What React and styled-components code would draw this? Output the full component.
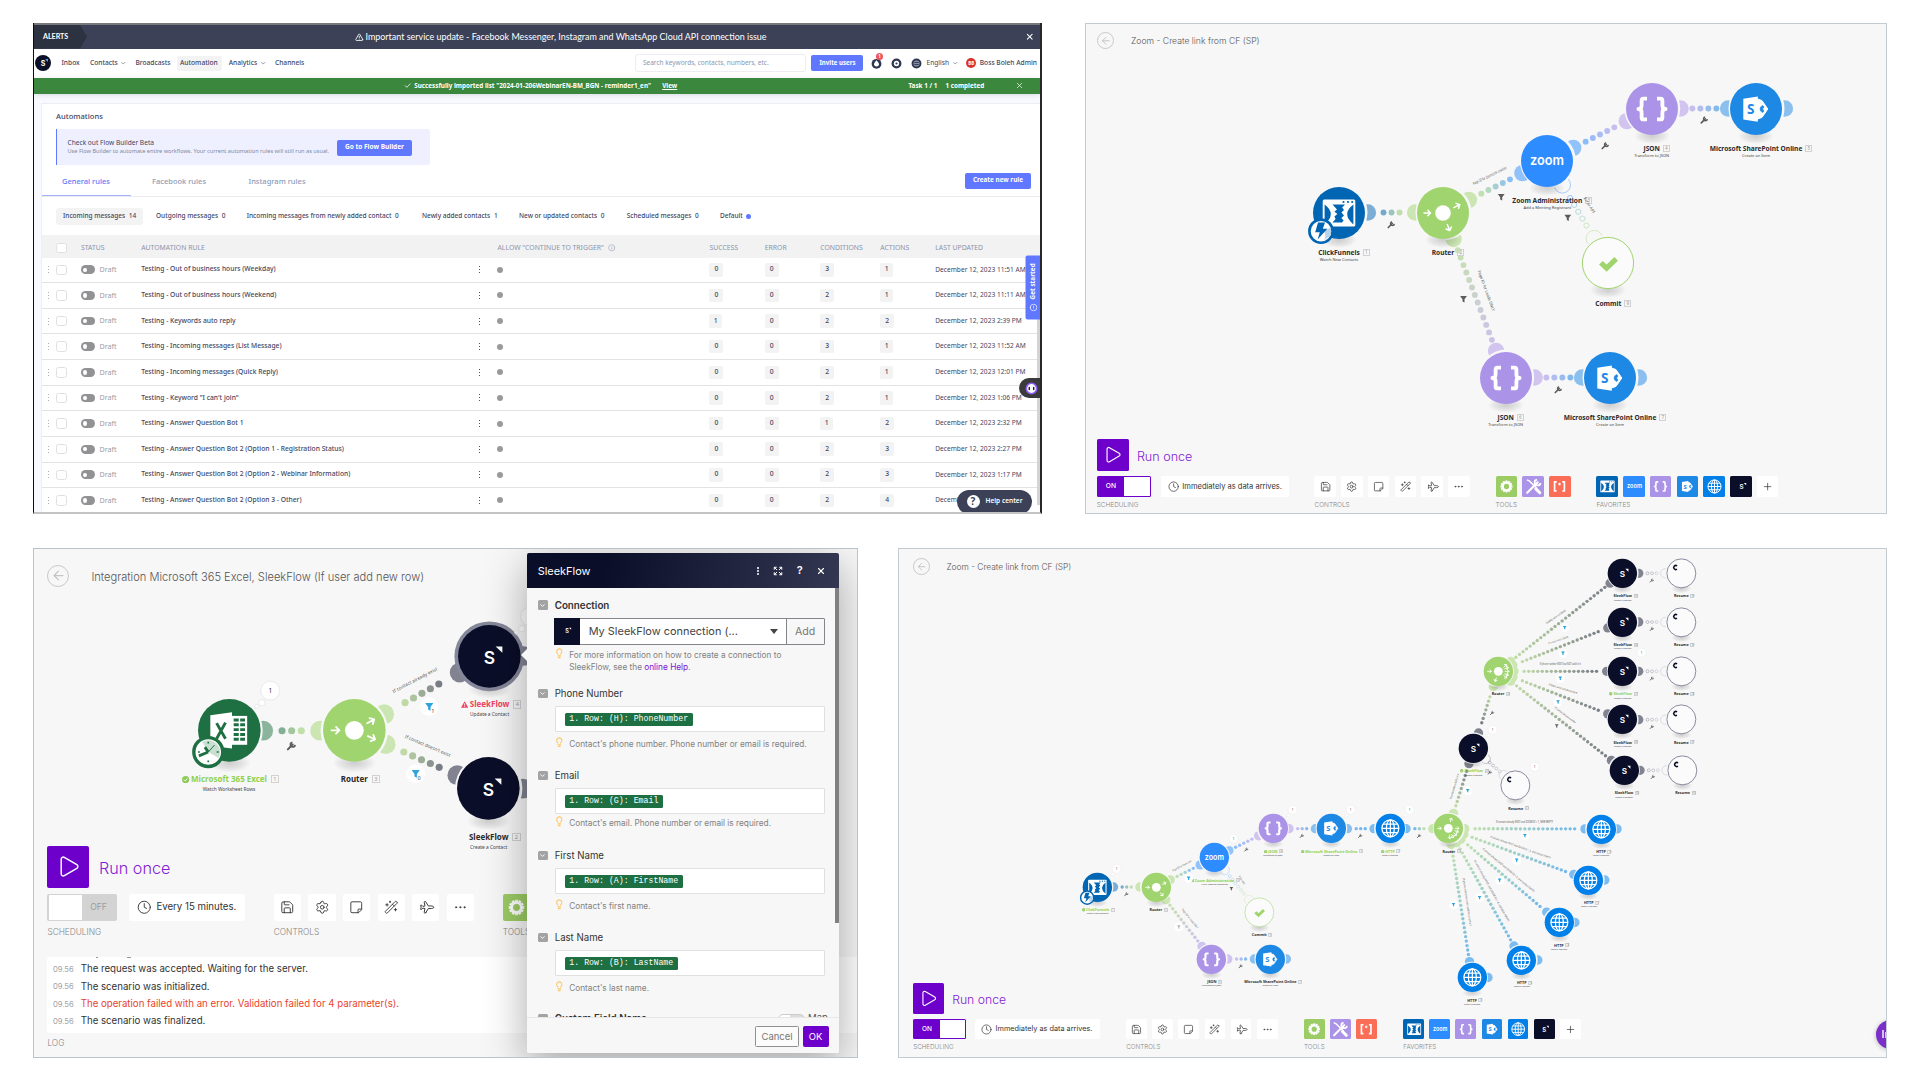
import React from "react";
import styled, { createGlobalStyle, css } from "styled-components";
import {
  ArrowLeft, Check, ChevronDown, Clock, Ellipsis, EllipsisVertical, Info, Lightbulb,
  Plane, Play, Plus, Save, Settings, StickyNote, TriangleAlert, WandSparkles, X, Expand,
} from "lucide-react";

const GlobalStyle = createGlobalStyle`
  *, *::before, *::after { box-sizing: border-box; }
  body { margin: 0; background: #fff; overflow: hidden; }
  svg { display: block; flex: none; }
`;

const NOTO = `"Noto Sans", "Open Sans", sans-serif`;
const INTER = `Inter, "Liberation Sans", sans-serif`;

/* ---------- page ---------- */
const Page = styled.main`
  width: 1920px; height: 1080px; padding: 23px 33px 0;
  display: flex; flex-direction: column; gap: 34px; background: #fff;
`;
const Shelf = styled.div`display: flex; justify-content: space-between; align-items: flex-start;`;

/* ---------- automation list ---------- */
const Inbox = styled.section`
  width: 1009px; height: 491px; overflow: hidden; position: relative;
  border-left: 1px solid #0c0c0c; border-right: 2px solid #26272b; border-bottom: 2px solid #c4c4c4;
  background: #f8f9fe; font: 500 6.65px/1.3 ${NOTO}; color: #3f4663; white-space: nowrap;
  display: flex; flex-direction: column;
`;
const AlertBar = styled.div`
  height: 25.5px; border-top: 2px solid #77787b; background: #3c4158; color: #fff;
  display: flex; align-items: center; font-family: Lato, sans-serif; flex: none;
`;
const AlertTag = styled.div`
  align-self: stretch; width: 53px; padding-left: 9px; background: #2d3240;
  display: flex; align-items: center; font-weight: 700; font-size: 7.1px;
  clip-path: polygon(0 0, 46px 0, 53px 50%, 46px 100%, 0 100%);
`;
const AlertText = styled.div`
  margin-left: 268px; width: 670px; display: flex; align-items: center; gap: 2px; font-size: 8.95px; font-weight: 400;
`;
const Nav = styled.nav`height: 29.5px; background: #fff; display: flex; align-items: center; padding-left: 1px; flex: none;`;
const Logo = styled.div`
  width: 16px; height: 16px; border-radius: 50%; background: #0b1029; color: #fff; flex: none; position: relative;
  display: grid; place-items: center; margin: 0 10.5px 0 0; font: 700 7px/1 ${INTER};
  &::after { content: ""; position: absolute; left: 10px; top: 3.5px; border-top: 3px solid #4ea2ff; border-left: 3px solid transparent; }
`;
const NavItem = styled.div`
  width: ${(p) => p.$w}px; height: 15px; display: flex; align-items: center; gap: 2.5px; flex: none;
  margin-right: ${(p) => p.$mr || 0}px; padding-left: ${(p) => p.$pl || 0}px; border-radius: 2px;
  background: ${(p) => (p.$active ? "#f3f3f4" : "transparent")}; font-weight: ${(p) => p.$fw || "inherit"};
`;
const Search = styled.div`
  width: 170.5px; height: 18px; border: 1px solid #ececf1; border-radius: 3px; padding-left: 6.5px;
  display: flex; align-items: center; font-size: 6.5px; font-weight: 400; color: #8b97b3; margin: 0 5.5px 0 330.5px;
`;
const Btn = styled.div`
  width: ${(p) => p.$w}px; height: 16px; border-radius: 2px; background: #5f78ff; color: #fff; flex: none;
  display: grid; place-items: center; font-weight: 700; font-size: ${(p) => p.$fs || 6.4}px;
`;
const IconBar = styled.div`display: flex; margin-left: 3px;`;
const IconSpot = styled.div`width: 20px; display: flex; justify-content: center; position: relative; flex: none;`;
const Dot = styled.i`
  position: absolute; left: 9.5px; top: -4.5px; width: 7px; height: 7px; border-radius: 50%;
  background: #f4515c; color: #fff; font: 700 4.5px/7px ${NOTO}; text-align: center;
`;
const Avatar = styled.div`
  width: 10px; height: 10px; border-radius: 50%; background: #d9342b; color: #fff;
  font: 700 4.5px/10px ${NOTO}; text-align: center; margin-right: 3.5px;
`;
const Success = styled.div`
  height: 15.5px; background: #3b873e; color: #fff; display: flex; align-items: center; flex: none; gap: 0;
  font-weight: 700; font-size: 6.32px; box-shadow: 0 1px 5px rgba(60, 66, 88, .16); padding-left: 369.5px;
`;
const SuccessCheck = styled(Check)`margin-right: 3.2px;`;
const Card = styled.div`
  margin: 9.5px 0 0 7px; border-top: 1px solid #ececf3; border-left: 1px solid #eeeef4; background: #fff; flex: 1;
`;
const CardTitle = styled.h1`margin: 0; height: 25px; padding-left: 14px; font-size: 7.6px; font-weight: 500; line-height: 25.5px;`;
const Banner = styled.div`
  width: 374px; height: 36px; margin-left: 14px; border-left: 1.5px solid #6079ff; background: #eef0ff;
  border-radius: 0 2px 2px 0; padding: 1px 0 0 10.5px; display: flex; align-items: center; font-weight: 400; font-size: 6.6px;
`;
const BannerText = styled.div`
  width: 269.5px; line-height: 9px;
  small { display: block; font-size: 5.61px; color: #7f879e; line-height: 9.5px; }
`;
const Tabs = styled.div`
  height: 32px; border-bottom: 1px solid #ebebed; display: flex; align-items: center; font-size: 7.5px;
`;
const Tab = styled.div`
  align-self: stretch; width: ${(p) => p.$w}px; padding: 0 0 0 ${(p) => p.$pl}px; line-height: 32px;
  color: ${(p) => (p.$on ? "#6179f8" : "#8d9cb8")};
  border-bottom: ${(p) => (p.$on ? "1.5px solid #a5b2fb" : "0")};
`;
const Filters = styled.div`height: 38px; display: flex; align-items: center; padding: .5px 0 0 14px; font-size: 6.51px;`;
const FilterItem = styled.div`
  height: 17.5px; border-radius: 3px; padding-left: 7px; width: ${(p) => p.$w}px; margin-right: ${(p) => p.$mr || 0}px;
  background: ${(p) => (p.$on ? "#f3f3f4" : "transparent")}; display: flex; align-items: center; gap: 3.6px;
`;
const BlueDot = styled.i`width: 5px; height: 5px; border-radius: 50%; background: #5f78ff;`;
const rowGrid = css`
  display: grid; align-items: center;
  grid-template-columns: 14px 25px 60.2px 334.8px 21.5px 212px 55.3px 55.5px 60px 55px 1fr;
`;
const HeadRow = styled.div`
  ${rowGrid} height: 22.5px; background: #f2f2f3; color: #8a94ab; font-size: 6.85px; font-weight: 400; padding-top: 3.5px;
`;
const Row = styled.div`${rowGrid} height: 25.64px; border-bottom: 1px solid #e3e3e5; background: #fff; font-size: 6.72px;`;
const Box = styled.i`width: 10.5px; height: 10.5px; border: 1px solid #e0e0e3; border-radius: 2.5px; background: #fff;`;
const Dots = styled.i`
  width: 1.4px; height: 7px; margin-left: ${(p) => (p.$c ? 3 : 5.8)}px;
  background: repeating-linear-gradient(${(p) => p.$c || "#b0b0b4"} 0 1.4px, transparent 1.4px 2.8px);
`;
const Status = styled.div`display: flex; align-items: center; gap: 4.5px; color: #9d9da1; font-weight: 400; font-size: 7.1px;`;
const Toggle = styled.i`
  width: 14px; height: 8.8px; border-radius: 5px; background: #929294; display: flex; align-items: center; padding-left: 2.4px;
  &::after { content: ""; width: 4px; height: 4.6px; border-radius: 50%; background: #fff; }
`;
const GreyDot = styled.i`width: 6px; height: 6px; border-radius: 50%; background: #9a9a9c;`;
const Chip = styled.span`
  width: ${(p) => (p.$n === 1 ? 12.6 : 14)}px; height: 13.6px; border-radius: 2px; background: #f3f3f4; display: grid; place-items: center;
`;
const DateText = styled.span`font-weight: 400; font-size: 6.6px;`;
const HeadLabel = styled.span`display: flex; align-items: center; gap: 4px; grid-column: ${(p) => p.$col};`;
const ScrollRail = styled.i`position: absolute; right: 0; top: 234px; width: 3px; height: 248px; background: #d4d4d6;`;
const SideTab = styled.div`
  position: absolute; right: 0; top: 233px; width: 14.5px; height: 63.5px; background: #5f78ff; color: #fff; border-radius: 0 2px 2px 0;
  writing-mode: vertical-rl; transform: rotate(180deg); display: flex; align-items: center; gap: 4px; padding-top: 8px;
  font-weight: 700; font-size: 6.4px;
`;
const Bot = styled.div`
  position: absolute; right: 0; top: 355px; width: 21px; height: 20px; border-radius: 10px 0 0 10px; background: #3a3a3d;
  display: grid; place-items: center; padding-left: 3px;
`;
const Help = styled.div`
  position: absolute; right: 8.5px; top: 466.5px; width: 74.5px; height: 24px; border-radius: 12px; background: #3c4158; color: #fff;
  display: flex; align-items: center; gap: 6px; padding-left: 9.5px; font-weight: 600; font-size: 6.54px;
  b { width: 13px; height: 13px; border-radius: 50%; background: #fff; color: #3c4158; font: 700 10px/13px ${NOTO}; text-align: center; }
`;

const RULES = [
  ["Testing - Out of business hours (Weekday)", [0, 0, 3, 1], "11:51 AM"],
  ["Testing - Out of business hours (Weekend)", [0, 0, 2, 1], "11:11 AM"],
  ["Testing - Keywords auto reply", [1, 0, 2, 2], "2:39 PM"],
  ["Testing - Incoming messages (List Message)", [0, 0, 3, 1], "11:52 AM"],
  ["Testing - Incoming messages (Quick Reply)", [0, 0, 2, 1], "12:01 PM"],
  ['Testing - Keyword "I can\'t join"', [0, 0, 2, 1], "1:06 PM"],
  ["Testing - Answer Question Bot 1", [0, 0, 1, 2], "2:32 PM"],
  ["Testing - Answer Question Bot 2 (Option 1 - Registration Status)", [0, 0, 2, 3], "2:27 PM"],
  ["Testing - Answer Question Bot 2 (Option 2 - Webinar Information)", [0, 0, 2, 3], "1:17 PM"],
  ["Testing - Answer Question Bot 2 (Option 3 - Other)", [0, 0, 2, 4], "1:12 PM"],
];

function AutomationList() {
  return (
    <Inbox>
      <AlertBar>
        <AlertTag>ALERTS</AlertTag>
        <AlertText><TriangleAlert size={8.5} strokeWidth={2.4} />Important service update - Facebook Messenger, Instagram and WhatsApp Cloud API connection issue</AlertText>
        <X size={9.5} strokeWidth={2.6} />
      </AlertBar>
      <Nav>
        <Logo>S</Logo>
        <NavItem $w={28.5}>Inbox</NavItem>
        <NavItem $w={45.5}>Contacts<ChevronDown size={6.5} /></NavItem>
        <NavItem $w={36} $mr={5}>Broadcasts</NavItem>
        <NavItem $w={45.5} $active $pl={3.5} $mr={6.7}>Automation</NavItem>
        <NavItem $w={46.3}>Analytics<ChevronDown size={6.5} /></NavItem>
        <NavItem $w={30}>Channels</NavItem>
        <Search>Search keywords, contacts, numbers, etc.</Search>
        <Btn $w={52} $fs={6.1}>Invite users</Btn>
        <IconBar>
          <IconSpot>
            <svg width="11" height="11" viewBox="-5.5 -5.5 11 11">
              <circle r="4.9" cy=".3" fill="#2f3650" /><path d="M0-3.2C1.6-1.4 2.4-.4 2.4.8A2.4 2.2 0 0 1-2.4.8C-2.4-.4-1.6-1.4 0-3.2Z" fill="#fff" />
            </svg>
            <Dot>1</Dot>
          </IconSpot>
          <IconSpot><svg width="11" height="11" viewBox="-5.5 -5.5 11 11"><circle r="3.8" fill="none" stroke="#2f3650" strokeWidth="2.3" /><circle r="1.1" fill="#2f3650" /></svg></IconSpot>
          <IconSpot><svg width="11" height="11" viewBox="-5.5 -5.5 11 11"><circle r="4" fill="#8b90a5" stroke="#2f3650" strokeWidth="1.9" /><path d="M-2.2-1H2.2M-2.2 1H2.2" stroke="#2f3650" strokeWidth=".9" /></svg></IconSpot>
        </IconBar>
        <NavItem $w={39.8} $fw={400}>English<ChevronDown size={6.5} /></NavItem>
        <Avatar>BB</Avatar>Boss Boleh Admin
      </Nav>
      <Success>
        <SuccessCheck size={7.5} strokeWidth={2.5} />
        <NavItem $w={248}>Successfully imported list "2024-01-206WebinarEN-BM_BGN - reminder1_en"</NavItem>
        <NavItem $w={246.3}><u>View</u></NavItem>
        <NavItem $w={37}>Task 1 / 1</NavItem>
        <NavItem $w={70}>1 completed</NavItem>
        <X size={9} strokeWidth={1.8} />
      </Success>
      <Card>
        <CardTitle>Automations</CardTitle>
        <Banner>
          <BannerText>Check out Flow Builder Beta<small>Use Flow Builder to automate entire workflows. Your current automation rules will still run as usual.</small></BannerText>
          <Btn $w={75} $fs={6.5}>Go to Flow Builder</Btn>
        </Banner>
        <Tabs>
          <Tab $on $w={89} $pl={20}>General rules</Tab>
          <Tab $w={97} $pl={21}>Facebook rules</Tab>
          <Tab $w={737} $pl={20.5}>Instagram rules</Tab>
          <Btn $w={66} $fs={6.34}>Create new rule</Btn>
        </Tabs>
        <Filters>
          <FilterItem $on $w={87} $mr={6}>Incoming messages<span>14</span></FilterItem>
          <FilterItem $w={90.7}>Outgoing messages<span>0</span></FilterItem>
          <FilterItem $w={175.3}>Incoming messages from newly added contact<span>0</span></FilterItem>
          <FilterItem $w={97}>Newly added contacts<span>1</span></FilterItem>
          <FilterItem $w={107.7}>New or updated contacts<span>0</span></FilterItem>
          <FilterItem $w={93.3}>Scheduled messages<span>0</span></FilterItem>
          <FilterItem $w={50}>Default<BlueDot /></FilterItem>
        </Filters>
        <HeadRow>
          <span /><Box />
          <HeadLabel $col="3">STATUS</HeadLabel>
          <HeadLabel $col="4">AUTOMATION RULE</HeadLabel>
          <HeadLabel $col="6">ALLOW "CONTINUE TO TRIGGER" <Info size={7.5} strokeWidth={1.6} /></HeadLabel>
          <HeadLabel $col="7">SUCCESS</HeadLabel>
          <HeadLabel $col="8">ERROR</HeadLabel>
          <HeadLabel $col="9">CONDITIONS</HeadLabel>
          <HeadLabel $col="10">ACTIONS</HeadLabel>
          <HeadLabel $col="11">LAST UPDATED</HeadLabel>
        </HeadRow>
        {RULES.map(([name, counts, time]) => (
          <Row key={name}>
            <Dots /><Box />
            <Status><Toggle />Draft</Status>
            <span>{name}</span>
            <Dots $c="#4b5270" />
            <GreyDot />
            {counts.map((n, i) => <Chip key={i} $n={n}>{n}</Chip>)}
            <DateText>December 12, 2023 {time}</DateText>
          </Row>
        ))}
      </Card>
      <ScrollRail />
      <SideTab><Info size={8} strokeWidth={2} /><span>Get started</span></SideTab>
      <Bot>
        <svg width="13" height="13" viewBox="-6.5 -6.5 13 13">
          <circle r="5.2" fill="#fff" stroke="#8a5cf5" strokeWidth="1.6" /><path d="M-2.2-1V1M2.2-1V1" stroke="#222" strokeWidth="1.5" strokeLinecap="round" />
        </svg>
      </Bot>
      <Help><b>?</b>Help center</Help>
    </Inbox>
  );
}

/* ---------- module glyphs, drawn in a circle of radius 26 ---------- */
const COLORS = {
  funnel: "#0065b3", router: "#a0d46e", zoom: "#2d8cff", json: "#ab93e8", share: "#1e88e5",
  http: "#0080e8", sleek: "#0a0e28", excel: "#1e7042", commit: "#a0d46e", resume: "#7d7f95",
};

function Gear({ c = "#fff", bg }) {
  return (
    <g>
      {[0, 30, 60, 90, 120, 150].map((a) => <rect key={a} x="-1.5" y="-8.6" width="3" height="17.2" fill={c} transform={`rotate(${a})`} />)}
      <circle r="6.9" fill={c} /><circle r="3.8" fill={bg} />
    </g>
  );
}

function Glyph({ kind, arrows }) {
  const c = COLORS[kind];
  switch (kind) {
    case "json":
      return (
        <g fill="none" stroke="#fff" strokeWidth="3.8" strokeLinejoin="round">
          <path d="M-5-10.4H-8.6Q-10.4-10.4-10.4-8.4V-3.4Q-10.4 0-13.6 0Q-10.4 0-10.4 3.4V8.4Q-10.4 10.4-8.6 10.4H-5" />
          <path d="M5-10.4H8.6Q10.4-10.4 10.4-8.4V-3.4Q10.4 0 13.6 0Q10.4 0 10.4 3.4V8.4Q10.4 10.4 8.6 10.4H5" />
        </g>
      );
    case "share":
      return (
        <g>
          <path d="M1-10.2L6-8.4L11.8 0L6 8.4L1 10.2Z" fill="#fff" stroke="#fff" strokeWidth="1" strokeLinejoin="round" />
          <path d="M6.8-3.6Q4 -2.6 4 0Q4 2.6 6.8 3.6L8 2L6.6 0L8-2Z" fill={c} stroke={c} strokeWidth=".6" strokeLinejoin="round" />
          <path d="M-12.7-10.2L1.8-12.6V12.8L-12.7 10.4Z" fill="#fff" />
          <text x="-5.2" y="4.8" textAnchor="middle" fontFamily="Open Sans" fontWeight="700" fontSize="13.5" fill={c}>S</text>
        </g>
      );
    case "zoom":
      return <text x="0" y="4" textAnchor="middle" textLength="34" lengthAdjust="spacingAndGlyphs" fontFamily="Inter" fontWeight="600" fontSize="14.6" fill="#fff">zoom</text>;
    case "funnel":
      return (
        <g>
          <rect x="-16.3" y="-13.6" width="32.6" height="27" rx="1.5" fill="#fff" />
          <path d="M-14.4-8.4Q-2 1-14.4 11.4ZM14.4-8.4Q2 1 14.4 11.4Z" fill={c} />
          <path d="M-6.5-8.4H6L3.2-5.4L5-3L2.4-.4L5 2.4L2.4 5L4.6 7.6L3 9.6H-6.5L-3.4 6L-4.6 3.6L-1.6 1L-4.6-1.2L-2-3.6Z" fill={c} />
          <g fill={c}><circle cx="4.5" cy="-11" r="1.1" /><circle cx="9" cy="-11" r="1.1" /><circle cx="13.2" cy="-11" r="1.1" /></g>
        </g>
      );
    case "router":
      return (
        <g>
          <circle r="7.8" fill="#fff" />
          {[180, ...(arrows || [])].map((a, i) => (
            <g key={i} transform={`rotate(${a}) translate(15.6) rotate(${i === 0 ? 180 : 0})`}>
              <path d="M-3.4 0H3M.4-2.8L3.2 0L.4 2.8" fill="none" stroke="#fff" strokeWidth="1.5" strokeLinecap="round" strokeLinejoin="round" />
            </g>
          ))}
        </g>
      );
    case "commit":
      return <path d="M-9 1.6L-5.2-2L-1.4 1.6L6.4-6L10-2.2L-1.4 8.8Z" fill={c} />;
    case "resume":
      return <path d="M-7.6-13A3.6 3.6 0 1 0-7.8-7.4" fill="none" stroke="#0a0e28" strokeWidth="2.7" />;
    case "sleek":
      return (
        <g fill="#fff">
          <text x="0" y="6.4" textAnchor="middle" fontFamily="Inter" fontWeight="600" fontSize="14.5">S</text>
          <path d="M5.2-8.2H10.8V-3Z" />
        </g>
      );
    case "http":
      return (
        <g fill="none" stroke="#fff" strokeWidth="2.2">
          <circle r="15" /><ellipse rx="7" ry="15" /><path d="M0-15V15M-15 0H15M-13-7.5H13M-13 7.5H13" />
        </g>
      );
    case "excel":
      return (
        <g>
          <path d="M2-12H14.8V12H2Z" fill="#fff" />
          <path d="M3.6-8.6H13M3.6-4.6H13M3.6-.6H13M3.6 3.4H13M3.6 7.4H13" stroke={c} strokeWidth="2.4" strokeDasharray="4.2 1.2" />
          <path d="M-15.8-12.6L2.2-15V15L-15.8 12.8Z" fill="#fff" />
          <path d="M-10.6-6L-3.2 7M-3.2-6.4L-10.6 7" stroke={c} strokeWidth="2.4" />
        </g>
      );
    default:
      return null;
  }
}

function Badge({ kind }) {
  if (kind === "funnel")
    return (
      <g transform="translate(-18 18.2)">
        <circle r="11.6" fill="#fff" stroke={COLORS.funnel} strokeWidth="2.6" />
        <path d="M3 0A9 9 0 0 1 3 9L10 4V-4Z" fill="#b9d3ea" />
        <path d="M-3-8.6H4L1.8-2.4H6.4L-3.4 8.4L-1.2 1H-5.8Z" fill={COLORS.funnel} />
      </g>
    );
  if (kind === "excel")
    return (
      <g transform="translate(-17.5 18)">
        <circle r="12" fill="#fff" stroke={COLORS.excel} strokeWidth="2.8" />
        <path d="M0 0L-5-8.6A10 10 0 0 1 8.6 5Z" fill="#c9dfd2" />
        <path d="M0 0L-7.8 3.2M0 0L-2.8-4" stroke={COLORS.excel} strokeWidth="2.4" /><path d="M0 0L5.2-5.8" stroke={COLORS.excel} strokeWidth=".8" />
        <path d="M0-8.6V-7M0 7V8.6M-8.6 0H-7M7 0H8.6" stroke={COLORS.excel} strokeWidth="1.4" />
      </g>
    );
  return null;
}

/* ---------- scenario canvas ---------- */
const Canvas = styled.div`position: absolute; inset: 0; overflow: hidden;`;
const Wires = styled.svg`position: absolute; left: 0; top: 0; width: 100%; height: 100%;`;
const NodeBox = styled.div`
  --s: ${(p) => p.$s}px;
  position: absolute; left: ${(p) => p.$x}px; top: ${(p) => p.$y}px; width: 0; height: 0;
  display: flex; justify-content: center; font-family: ${NOTO}; white-space: nowrap;
`;
const Disc = styled.svg`
  position: absolute; left: calc(var(--s) * -36); top: calc(var(--s) * -36);
  width: calc(var(--s) * 72); height: calc(var(--s) * 72);
`;
const Caption = styled.div`
  position: absolute; top: calc(var(--s) * 35.7); display: flex; flex-direction: column; align-items: center;
`;
const Name = styled.div`
  position: relative; font-size: calc(var(--s) * 6.62); line-height: calc(var(--s) * 9); font-weight: 700; color: ${(p) => p.$c || "#2b2b2b"};
`;
const Sub = styled.div`font-size: calc(var(--s) * 4); line-height: calc(var(--s) * 6.8); color: #444;`;
const Tag = styled.span`
  position: absolute; left: calc(100% + var(--s) * 3); top: calc(var(--s) * 1); width: calc(var(--s) * 7); height: calc(var(--s) * 7);
  border: calc(var(--s) * .8) solid #d2d2d2; font-size: calc(var(--s) * 4.6); line-height: calc(var(--s) * 5.4); text-align: center; font-weight: 400; color: #999;
`;
const State = styled.svg`
  position: absolute; right: calc(100% + var(--s) * 1.2); top: calc(var(--s) * 1.8); width: calc(var(--s) * 6); height: calc(var(--s) * 6);
`;

function Node({ n, s }) {
  const hollow = n.kind === "commit" || n.kind === "resume";
  const c = COLORS[n.kind];
  return (
    <NodeBox $x={n.x} $y={n.y} $s={s}>
      <Disc viewBox="-36 -36 72 72" overflow="visible">
        <ellipse cy="27" rx="18" ry="8" fill="url(#shade)" />
        {n.selected && <circle r="29" fill="#85879a" />}
        <circle r={hollow ? 25.6 : 26} fill={hollow ? "#fbfbfb" : c} stroke={hollow ? c : "none"} strokeWidth={n.kind === "resume" ? 1.6 : 1} />
        <Glyph kind={n.kind} arrows={n.arrows} />
        <Badge kind={n.kind} />
        {n.bubble && (
          <g fill="#fff" stroke="#e6e6e6" strokeWidth=".7">
            <circle cx="22.5" cy="-20" r="1.6" /><circle cx="27" cy="-23" r="2.7" /><circle cx="34" cy="-33" r="7.9" />
            <text x="34" y="-31" textAnchor="middle" fontFamily="Noto Sans" fontSize="5.4" fill="#333" stroke="none">1</text>
          </g>
        )}
      </Disc>
      <Caption>
        <Name $c={n.ok ? "#8fd14f" : n.bad ? "#ee4460" : undefined}>
          {n.ok && <State viewBox="-3 -3 6 6"><circle r="3" fill="#8fca5a" /><path d="M-1.4 0L-.3 1.1L1.5-1" fill="none" stroke="#fff" strokeWidth=".8" /></State>}
          {n.bad && <State viewBox="-3 -3 6 6"><path d="M0-2.8L3 2.6H-3Z" fill="#ee4460" /><path d="M0-1V.8M0 1.3V2" stroke="#fff" strokeWidth=".7" /></State>}
          {n.name}
          <Tag>{n.id}</Tag>
        </Name>
        {n.sub && <Sub>{n.sub}</Sub>}
      </Caption>
    </NodeBox>
  );
}

const mix = (a, b, t) => {
  const p = (h) => [1, 3, 5].map((i) => parseInt(h.slice(i, i + 2), 16));
  const [x, y] = [p(a), p(b)];
  return `#${x.map((v, i) => Math.round(v + (y[i] - v) * t).toString(16).padStart(2, "0")).join("")}`;
};
const soft = (h) => mix(h, "#f7f7f7", 0.5);

function Port({ n, angle, s, hollow, color }) {
  const r = (angle * Math.PI) / 180;
  const cx = n.x + Math.cos(r) * 28.4 * s;
  const cy = n.y + Math.sin(r) * 28.4 * s;
  return <circle cx={cx} cy={cy} r={8.2 * s} fill={hollow ? "#f7f7f7" : soft(color)} stroke={hollow ? soft(color) : "none"} strokeWidth={0.8 * s} />;
}

function Mark({ m, s }) {
  const dark = m.dark || "#5c5c5c";
  if (m.t === "w")
    return (
      <g transform={`translate(${m.x} ${m.y}) scale(${s})`}>
        <path d="M-3.2 3.2L.8-.8" stroke={dark} strokeWidth="1.7" strokeLinecap="round" /><path d="M.6-2.6A1.9 1.9 0 1 0 2.8-.5" fill="none" stroke={dark} strokeWidth="1.5" />
      </g>
    );
  if (m.t === "f")
    return (
      <g transform={`translate(${m.x} ${m.y}) scale(${s})`}>
        {m.disc && <circle r="7.8" fill="#fff" />}
        <path d="M-3.4-3H3.4L1 .2V3.4L-1 2.4V.2Z" fill={m.blue ? "#2ea3dc" : dark} />
        {m.n != null && <text x="1.6" y="5" fontSize="4.6" fontFamily="Noto Sans" fill="#444">{m.n}</text>}
      </g>
    );
  return (
    <text transform={`translate(${m.x} ${m.y}) rotate(${m.r})`} textAnchor="middle" y={s * 1.2} textLength={m.w}
      lengthAdjust="spacingAndGlyphs" fontFamily="Noto Sans" fontSize={m.fs || 3.9 * s} fill="#555">{m.s}</text>
  );
}

function Scenario({ ox, oy, s, nodes, links, marks }) {
  const map = {};
  nodes.forEach((n) => { map[n.k] = { ...n, x: n.x - ox, y: n.y - oy }; });
  const lines = links.map(([a, b, o = {}]) => {
    const A = map[a], B = map[b];
    const ang = (Math.atan2(B.y - A.y, B.x - A.x) * 180) / Math.PI;
    return { A, B, o, ang, D: Math.hypot(B.x - A.x, B.y - A.y) };
  });
  const arrows = {};
  lines.forEach((l) => { (arrows[l.A.k] = arrows[l.A.k] || []).push(l.ang); });
  return (
    <Canvas>
      <Wires>
        <defs>
          <radialGradient id="shade"><stop offset="0" stopColor="#000" stopOpacity=".17" /><stop offset=".6" stopColor="#000" stopOpacity=".08" /><stop offset="1" stopColor="#000" stopOpacity="0" /></radialGradient>
        </defs>
        {lines.map((l, i) => (
          <g key={i}>
            <Port n={l.A} angle={l.ang} s={s} hollow={l.o.hollow && !l.o.solidOut} color={COLORS[l.A.kind]} />
            <Port n={l.B} angle={l.ang + 180} s={s} hollow={l.o.hollow} color={COLORS[l.B.kind]} />
          </g>
        ))}
        {nodes.filter((n) => n.out).map((n) => <Port key={n.k} n={map[n.k]} angle={0} s={s} color={COLORS[n.kind]} />)}
        {nodes.map((n) => <circle key={n.k} cx={map[n.k].x} cy={map[n.k].y} r={28 * s} fill="#f7f7f7" />)}
        {lines.map(({ A, B, o, D }, i) => {
          const gaps = o.gaps ?? Math.floor((D / s - 80.2) / 8);
          return Array.from({ length: gaps + 1 }, (_, k) => {
            const t = 0.5 + ((k - gaps / 2) * 8 * s) / D;
            const f = mix(mix(COLORS[A.kind], COLORS[B.kind], gaps ? 0.08 + 0.84 * (k / gaps) : 0), "#f7f7f7", 0.44);
            return (
              <circle key={`${i}-${k}`} cx={A.x + (B.x - A.x) * t} cy={A.y + (B.y - A.y) * t} r={(o.hollow ? 2.6 : 2.95) * s}
                fill={o.hollow ? "none" : f} stroke={o.hollow ? f : "none"} strokeWidth={0.8 * s} />
            );
          });
        })}
      </Wires>
      {nodes.map((n) => <Node key={n.k} s={s} n={{ ...map[n.k], arrows: arrows[n.k] }} />)}
      <Wires>{marks.map((m, i) => <Mark key={i} s={s} m={{ ...m, x: m.x - ox, y: m.y - oy }} />)}</Wires>
    </Canvas>
  );
}

/* ---------- editor frame ---------- */
const Frame = styled.section`
  --u: ${(p) => p.$u}px;
  position: relative; overflow: hidden; width: ${(p) => p.$w}px; height: ${(p) => p.$h}px; background: #f7f7f7;
  border: 1px solid ${(p) => p.$line || "#c3cad0"}; font-family: ${INTER}; white-space: nowrap;
  display: flex; flex-direction: column; padding: ${(p) => p.$pt}px 0 ${(p) => p.$pb}px ${(p) => p.$pl}px;
`;
const Header = styled.header`
  position: relative; display: flex; align-items: center; gap: calc(var(--u) * 22); height: calc(var(--u) * 22);
  font-weight: 300; font-size: calc(var(--u) * 11.12); color: #555;
  span { padding-top: calc(var(--u) * 1.8); }
`;
const Back = styled.div`
  width: calc(var(--u) * 22); height: calc(var(--u) * 22); border: calc(var(--u) * 1.5) solid #c9c9c9; border-radius: 50%;
  display: grid; place-items: center; color: #c4c4c4;
  svg { width: calc(var(--u) * 15); height: calc(var(--u) * 15); }
`;
const RunRow = styled.div`
  position: relative; margin-top: auto; display: flex; align-items: center; gap: calc(var(--u) * 10.3); margin-bottom: calc(var(--u) * 6);
  font-weight: 300; font-size: calc(var(--u) * 16.2); color: #8420d4;
  span { padding-top: calc(var(--u) * 3); }
`;
const RunBtn = styled.div`
  width: calc(var(--u) * 41.3); height: calc(var(--u) * 41.5); border-radius: calc(var(--u) * 2); background: #6e00cc; color: #fff;
  display: grid; place-items: center;
  svg { width: calc(var(--u) * 25); height: calc(var(--u) * 25); }
`;
const Tools = styled.div`position: relative; display: flex; gap: ${(p) => p.$gap}px; margin-bottom: calc(var(--u) * -2);`;
const Group = styled.div`
  display: flex; flex-direction: column; font-weight: 300; font-size: calc(var(--u) * 8.3); color: #858585; line-height: calc(var(--u) * 22.5);
`;
const Buttons = styled.div`display: flex; gap: ${(p) => p.$g}px; height: calc(var(--u) * 27.3);`;
const ToolBtn = styled.div`
  width: ${(p) => p.$sz}px; height: calc(var(--u) * 27.3); border-radius: calc(var(--u) * 2); background: ${(p) => p.$bg || "#fff"};
  color: #333; display: grid; place-items: center;
  svg { width: calc(var(--u) * 14.5); height: calc(var(--u) * 14.5); }
`;
const FavIcon = styled(ToolBtn)`svg { width: calc(var(--u) * 27); height: calc(var(--u) * 27); }`;
const NoteIcon = styled(StickyNote)`transform: scaleY(-1);`;
const PlaneIcon = styled(Plane)`transform: rotate(45deg);`;
const Switch = styled.div`
  width: calc(var(--u) * 69.4); height: calc(var(--u) * 27.3); border-radius: calc(var(--u) * 2); display: flex; align-items: center;
  flex-direction: ${(p) => (p.$on ? "row" : "row-reverse")}; background: ${(p) => (p.$on ? "#6e00cc" : "#d3d3d3")};
  padding: calc(var(--u) * 1.4); color: ${(p) => (p.$on ? "#fff" : "#9c9c9c")}; font-size: calc(var(--u) * 8.6); font-weight: ${(p) => (p.$on ? 500 : 400)};
  i { width: calc(var(--u) * 33); height: 100%; background: #fff; }
  span { flex: 1; text-align: center; }
`;
const Schedule = styled.div`
  width: ${(p) => p.$w}px; margin-left: ${(p) => p.$ml}px; height: calc(var(--u) * 27.3); border-radius: calc(var(--u) * 2); background: #fff;
  display: flex; align-items: center; gap: calc(var(--u) * 4.5); padding-left: calc(var(--u) * 8.5);
  font-size: calc(var(--u) * 9.69); font-weight: 400; color: #333;
  svg { width: calc(var(--u) * 14.5); height: calc(var(--u) * 14.5); }
`;

const FAVS = ["funnel", "zoom", "json", "share", "http", "sleek"];

function Toolbar({ on, text, sw, sl, gap, sz, g, short }) {
  const thin = { strokeWidth: 1.5 };
  return (
    <>
      <RunRow><RunBtn><Play strokeWidth={1.4} /></RunBtn><span>Run once</span></RunRow>
      <Tools $gap={gap}>
        <Group>
          <Buttons $g={g}>
            <Switch $on={on}><span>{on ? "ON" : "OFF"}</span><i /></Switch>
            <Schedule $w={sw} $ml={sl}><Clock strokeWidth={1.5} />{text}</Schedule>
          </Buttons>
          SCHEDULING
        </Group>
        <Group>
          <Buttons $g={g}>
            <ToolBtn $sz={sz}><Save {...thin} /></ToolBtn>
            <ToolBtn $sz={sz}><Settings {...thin} /></ToolBtn>
            <ToolBtn $sz={sz}><NoteIcon {...thin} /></ToolBtn>
            <ToolBtn $sz={sz}><WandSparkles {...thin} /></ToolBtn>
            <ToolBtn $sz={sz}><PlaneIcon {...thin} /></ToolBtn>
            <ToolBtn $sz={sz}><Ellipsis {...thin} /></ToolBtn>
          </Buttons>
          CONTROLS
        </Group>
        <Group>
          <Buttons $g={g}>
            <FavIcon $sz={sz} $bg="#9ccc65"><svg viewBox="-15 -15 30 30"><Gear bg="#9ccc65" /></svg></FavIcon>
            {!short && (
              <>
                <FavIcon $sz={sz} $bg="#ab93e8">
                  <svg viewBox="-15 -15 30 30" stroke="#fff" fill="none">
                    <path d="M-9.5-9.5L-6-8L5 3" strokeWidth="2" /><path d="M3.4 3.4L9 9" strokeWidth="4.4" strokeLinecap="round" />
                    <path d="M6-6L-9 9" strokeWidth="3" strokeLinecap="round" /><path d="M5-9.8A4.2 4.2 0 1 0 10-5" strokeWidth="2.6" />
                  </svg>
                </FavIcon>
                <FavIcon $sz={sz} $bg="#fa6e58">
                  <svg viewBox="-15 -15 30 30" stroke="#fff" fill="none" strokeWidth="2.4"><path d="M-4-6.5H-7V6.5H-4M4-6.5H7V6.5H4" /><path d="M0-5.4V-1.4M-1.8-4.4L1.8-2.4M1.8-4.4L-1.8-2.4" strokeWidth="1.2" /></svg>
                </FavIcon>
              </>
            )}
          </Buttons>
          TOOLS
        </Group>
        {!short && (
          <Group>
            <Buttons $g={g}>
              {FAVS.map((k) => <FavIcon key={k} $sz={sz} $bg={COLORS[k]}><svg viewBox="-24 -24 48 48"><Glyph kind={k} /></svg></FavIcon>)}
              <ToolBtn $sz={sz}><Plus strokeWidth={1.5} /></ToolBtn>
            </Buttons>
            FAVORITES
          </Group>
        )}
      </Tools>
    </>
  );
}

const N = (k, kind, x, y, name, id, sub, extra) => ({ k, kind, x, y, name, id, sub, ...extra });
const OUT = { out: true };

/* ---------- webinar scenario ---------- */
const WEBINAR = {
  nodes: [
    N("cf", "funnel", 1339, 212.5, "ClickFunnels", 1, "Watch New Contacts"),
    N("r", "router", 1443, 212.5, "Router", 2),
    N("z", "zoom", 1547.3, 160.5, "Zoom Administration", 3, "Add a Meeting Registrant"),
    N("j", "json", 1651.7, 108.5, "JSON", 4, "Transform to JSON"),
    N("sp", "share", 1756, 108.5, "Microsoft SharePoint Online", 5, "Create an Item", OUT),
    N("c", "commit", 1608.3, 263, "Commit", 9),
    N("j2", "json", 1505.7, 377.5, "JSON", 6, "Transform to JSON"),
    N("sp2", "share", 1610, 377.5, "Microsoft SharePoint Online", 7, "Create an Item", OUT),
  ],
  links: [["cf", "r"], ["r", "z"], ["r", "j2"], ["z", "j"], ["z", "c", { hollow: true }], ["j", "sp"], ["j2", "sp2"]],
  marks: [
    { t: "w", x: 1391, y: 224.3 }, { t: "w", x: 1605, y: 145.3 }, { t: "w", x: 1704, y: 119.7 }, { t: "w", x: 1558, y: 389.3 },
    { t: "f", x: 1500.7, y: 197 }, { t: "f", x: 1567.3, y: 217.7 }, { t: "f", x: 1463, y: 299 },
    { t: "t", x: 1489.3, y: 175.7, r: -26, w: 37, s: "Page ID for Zoom Link creation" },
    { t: "t", x: 1588.7, y: 205.3, r: 58, w: 18, s: "Error API" },
    { t: "t", x: 1485.7, y: 290.7, r: 70, w: 43, s: "Page ID for Leads ONLY" },
  ],
};

/* ---------- excel scenario ---------- */
const EXCEL = {
  nodes: [
    N("x", "excel", 229, 730.7, "Microsoft 365 Excel", 1, "Watch Worksheet Rows", { ok: true, bubble: true }),
    N("r", "router", 354.3, 730.7, "Router", 3),
    N("s4", "sleek", 489.6, 656, "SleekFlow", 4, "Update a Contact", { bad: true, selected: true, bubble: true, out: true }),
    N("s2", "sleek", 488.7, 788.7, "SleekFlow", 2, "Create a Contact", OUT),
  ],
  links: [["x", "r"], ["r", "s4", { gaps: 4 }], ["r", "s2", { gaps: 4 }]],
  marks: [
    { t: "w", x: 291.7, y: 745.5 },
    { t: "f", x: 429.3, y: 706.7, disc: true, blue: true, n: 1 },
    { t: "f", x: 415.7, y: 773.7, disc: true, blue: true, n: 0 },
    { t: "t", x: 415, y: 680.3, r: -27.5, w: 50, s: "If contact already exist" },
    { t: "t", x: 427.7, y: 746, r: 23, w: 49, s: "If contact doesn't exist" },
  ],
};

/* ---------- full scenario ---------- */
const B = { ok: true, bubble: true };
const SLEEK_ROWS = [[1622.7, 573.3, 32], [1622.7, 622, 34], [1622.7, 671.3, 27], [1622.7, 719.7, 36], [1624, 770.3, 38]];
const f = (x, y) => ({ t: "f", x, y, disc: true, blue: true });
const w = (x, y) => ({ t: "w", x, y });
const tx = (x, y, r, width, s) => ({ t: "t", x, y, r, w: width, s, fs: 2.7 });
const FULL = {
  nodes: [
    N("cf", "funnel", 1097.5, 887, "ClickFunnels", 1, "Watch New Contacts", B),
    N("r", "router", 1155.9, 887, "Router", 2),
    N("z", "zoom", 1214.5, 857.7, "Zoom Administration", 3, "Add a Meeting Registrant", B),
    N("j", "json", 1273, 828.7, "JSON", 4, "Transform to JSON", B),
    N("sp", "share", 1331.4, 828.7, "Microsoft SharePoint Online", 5, "Create an Item", B),
    N("h", "http", 1390, 828.7, "HTTP", 11, "Make a request", B),
    N("r2", "router", 1448.8, 828.7, "Router", 12),
    N("c", "commit", 1259.2, 912.3, "Commit", 9),
    N("j2", "json", 1211.8, 959, "JSON", 6, "Transform to JSON"),
    N("sp2", "share", 1270.4, 959, "Microsoft SharePoint Online", 7, "Create an Item", OUT),
    N("h1", "http", 1601, 828.9, "HTTP", 19, "Make a request", OUT),
    N("h2", "http", 1588.8, 880, "HTTP", 17, "Make a request", OUT),
    N("h3", "http", 1558.9, 922.5, "HTTP", 18, "Make a request", OUT),
    N("h4", "http", 1521.8, 960, "HTTP", 16, "Make a request", OUT),
    N("h5", "http", 1472, 977.5, "HTTP", 13, "Make a request", OUT),
    N("r3", "router", 1498, 671.3, "Router", 26),
    N("sl", "sleek", 1473.7, 748.3, "SleekFlow", 20, "Create a Contact", B),
    N("re", "resume", 1515.7, 785.7, "Resume", 21, undefined, { bubble: true }),
    ...SLEEK_ROWS.map(([x, y, id], i) => N(`s${i}`, "sleek", x, y, "SleekFlow", id, "Create a Contact", i === 2 ? B : {})),
    ...SLEEK_ROWS.map(([x, y, id], i) => N(`q${i}`, "resume", x + 58.6, y, "Resume", id + 1)),
  ],
  links: [
    ["cf", "r"], ["r", "z"], ["r", "j2"], ["z", "j"], ["z", "c", { hollow: true }], ["j", "sp"], ["sp", "h"], ["h", "r2"], ["j2", "sp2"],
    ["r2", "h1", { gaps: 22 }], ["r2", "h2"], ["r2", "h3"], ["r2", "h4"], ["r2", "h5"], ["r2", "sl"],
    ["r3", "sl", { gaps: 6 }], ["sl", "re", { hollow: true, gaps: 3 }],
    ...SLEEK_ROWS.map((_, i) => ["r3", `s${i}`, i > 0 && i < 4 ? { gaps: i === 2 ? 16 : 18 } : {}]),
    ...SLEEK_ROWS.map((_, i) => [`s${i}`, `q${i}`, { hollow: true, solidOut: true, gaps: 2 }]),
  ],
  marks: [
    w(1126.5, 894), w(1246.5, 849.3), w(1302, 835.7), w(1360.4, 835.7), w(1419.2, 835.7), w(1240.8, 966),
    w(1652, 580.3), w(1652, 628.7), w(1652, 678.3), w(1652, 726.7), w(1653, 776.7), w(1492.3, 712.7), w(1490, 772.3),
    f(1188.6, 878.3), f(1524.9, 835.7), f(1516.7, 860.3), f(1499.6, 880.3), f(1479.6, 897.7), f(1453.5, 904.7),
    f(1564.7, 627.7), f(1563, 653.3), f(1560.3, 678.3), f(1558, 702), f(1467.7, 790.7),
    { t: "f", x: 1231.4, y: 888.7 }, { t: "f", x: 1556.7, y: 726 }, { t: "f", x: 1178.8, y: 927, disc: true, dark: "#b5b5b5" },
    tx(1182, 866, -28, 21, "Page ID for Zoom Link"), tx(1241.6, 880.3, 60, 10, "Error API"), tx(1189.8, 918.7, 51, 24.5, "Page ID for Leads ONLY"),
    tx(1524.5, 822, 0, 57, "If contact already EXIST and ZOOM ID = 1, NEW EMPTY"),
    tx(1520.5, 847.5, 19.6, 64, "If contact already EXIST and ZOOM ID = 2, and contact EMPTY"),
    tx(1508.5, 870.3, 40, 67, "If contact already EXIST and ZOOM ID = 3, and contact EMPTY"),
    tx(1491.5, 891, 61, 70, "If contact already EXIST and ZOOM ID = 4, and NEW EMPTY"),
    tx(1467, 902, 81.5, 48, "If phone and email exist, update a contact"),
    tx(1556, 617, -34, 23, "If EMAIL exists and ZOOM"), tx(1558.3, 640.3, -19, 21, "If contact exist, ZOOM"),
    tx(1560.3, 664, 0, 41, "If phone number EXIST but NOT valid in it"), tx(1563, 689, 17, 30, "If EMAIL exists and phone blank"),
    tx(1565.3, 715.3, 37, 26, "If contact phone number"), tx(1454.7, 786.3, -73, 26, "If contact does NOT exist"),
  ],
};

/* ---------- log ---------- */
const Log = styled.div`
  position: relative; margin-top: 15px; height: 76px; background: #fff; border-radius: 2px 0 0 2px; overflow: hidden;
  display: flex; flex-direction: column; padding-top: 3.8px; flex: none;
  &::before { content: ""; position: absolute; left: 49px; top: 0; width: 35px; height: 1px; background: linear-gradient(90deg, #999 0 2px, transparent 2px 31px, #999 31px); }
`;
const LogLine = styled.div`
  height: 17.3px; display: flex; align-items: center; padding-left: 5.5px; font-size: 9.67px; color: ${(p) => (p.$err ? "#e8432d" : "#333")};
  span { width: 27.8px; font-weight: 300; font-size: 7.8px; color: #888; }
`;
const LogCaption = styled.div`position: relative; font-weight: 300; font-size: 8.3px; line-height: 21px; height: 20px; color: #858585;`;

/* ---------- module dialog ---------- */
const Dialog = styled.div`
  position: absolute; left: 493px; top: 4px; width: 312px; height: 500px; border-radius: 2px; background: #f7f7f7; display: flex; flex-direction: column;
  box-shadow: 0 12px 44px rgba(0, 0, 0, .34);
`;
const Pointer = styled.i`
  position: absolute; left: -6px; top: 96px; border: 6px solid transparent; border-left: 0; border-right-color: #f7f7f7;
`;
const DialogHead = styled.div`
  height: 35px; border-radius: 2px 2px 0 0; background: linear-gradient(100deg, #0b0e29 25%, #343751); color: #fff; flex: none;
  display: flex; align-items: center; padding: 0 13px 0 10.7px; font-size: 10.95px; gap: 10.3px;
  span { flex: 1; } b { font: 600 11px/1 ${INTER}; width: 10px; text-align: center; margin: 0 1px; }
`;
const DialogBody = styled.div`
  position: relative; height: 429px; overflow: hidden;
  &::after { content: ""; position: absolute; right: 0; top: 0; width: 4px; height: 335px; background: #808080; }
`;
const Field = styled.div`height: ${(p) => p.$h}px; padding: ${(p) => p.$pt || 11}px 14px 0 10.7px; position: relative;`;
const Label = styled.div`
  display: flex; align-items: center; gap: 7px; height: 12px; color: #333; font-size: ${(p) => (p.$b ? 9.8 : 9.65)}px; font-weight: ${(p) => (p.$b ? 600 : 400)};
`;
const Fold = styled.i`width: 10px; height: 9.5px; border-radius: 1.5px; background: #a3a3a3; color: #fff; display: grid; place-items: center;`;
const Input = styled.div`
  margin: 7px 0 0 17px; height: 26px; width: 270px; border: 1px solid #e0e0e0; background: #fff; border-radius: 1px; display: flex; align-items: center; padding: 1px 0 0 9px;
`;
const Pill = styled.span`
  height: 13px; border-radius: 1.5px; background: #1e7042; color: #fff; padding: 0 4.6px; font: 400 8.26px/12.4px "Liberation Mono", monospace;
`;
const Select = styled.div`
  margin: 6.5px 0 0 16.5px; height: 27px; width: 270.5px; border: 1px solid #83858a; border-radius: 1px; background: #fff; display: flex; align-items: center;
  font-size: 10.95px; color: #444;
`;
const SelectIcon = styled.div`align-self: stretch; width: 25.5px; margin: -1px 9px -1px -1px; background: #0b0e29; display: grid; place-items: center;`;
const SelectText = styled.div`flex: 1;`;
const Caret = styled.i`border: 4px solid transparent; border-top: 5px solid #444; border-bottom: 0; margin-right: 8px;`;
const Add = styled.div`align-self: stretch; width: 38px; border-left: 1px solid #83858a; display: grid; place-items: center; color: #777; font-size: 10.6px; background: #f7f7f7;`;
const Hint = styled.div`
  display: flex; gap: 4.5px; margin: ${(p) => p.$mt}px 0 0 16.5px; font-size: 8.28px; line-height: 12px; color: #828282;
  svg { margin-top: -1px; } em { font-style: normal; color: #7a14d2; }
`;
const DialogFoot = styled.div`
  height: 36px; border-top: 1px solid #e6e6e6; display: flex; justify-content: flex-end; align-items: center; gap: 3.6px; padding: 1px 10.5px 0 0;
  position: relative; background: #f7f7f7; border-radius: 0 0 2px 2px;
`;
const FootBtn = styled.div`
  height: 21px; width: ${(p) => p.$w}px; border-radius: 1.5px; display: grid; place-items: center; font-size: 9.5px;
  border: 1px solid ${(p) => (p.$p ? "#6e00cc" : "#909090")}; background: ${(p) => (p.$p ? "#6e00cc" : "#fbfbfb")}; color: ${(p) => (p.$p ? "#fff" : "#777")};
`;
const MapSwitch = styled.i`position: absolute; left: 251px; top: 15px; width: 27px; height: 11px; border: 1px solid #ccc; border-radius: 5px; background: linear-gradient(90deg, #fff 45%, #ddd 45%);`;
const MapText = styled.span`position: absolute; left: 281px; top: 12.6px; font-size: 9.6px; line-height: 12px; color: #555;`;
const Assist = styled.div`
  position: absolute; right: -19px; bottom: 8px; width: 29px; height: 29px; border-radius: 50%; background: #7a2fc9;
  display: flex; align-items: center; padding-left: 6px; box-shadow: 0 1px 5px rgba(0, 0, 0, .25);
`;

const FIELDS = [
  ["Phone Number", "1. Row: (H): PhoneNumber", "Contact's phone number. Phone number or email is required.", 82, 5.5],
  ["Email", "1. Row: (G): Email", "Contact's email. Phone number or email is required.", 80, 3],
  ["First Name", "1. Row: (A): FirstName", "Contact's first name.", 82, 5.8],
  ["Last Name", "1. Row: (B): LastName", "Contact's last name.", 79, 5.8],
];
const Chev = () => <Fold><ChevronDown size={7} strokeWidth={3} /></Fold>;
const Bulb = () => <Lightbulb size={10.5} strokeWidth={2.4} color="#fbc766" />;

function ModuleDialog() {
  return (
    <Dialog>
      <Pointer />
      <DialogHead>
        <span>SleekFlow</span>
        <EllipsisVertical size={10} strokeWidth={3} /><Expand size={10} strokeWidth={2.4} /><b>?</b><X size={10} strokeWidth={2.6} />
      </DialogHead>
      <DialogBody>
        <Field $h={88.3} $pt={11.2}>
          <Label $b><Chev />Connection</Label>
          <Select>
            <SelectIcon><svg width="20" height="20" viewBox="-26 -26 52 52"><Glyph kind="sleek" /></svg></SelectIcon>
            <SelectText>My SleekFlow connection (...</SelectText><Caret /><Add>Add</Add>
          </Select>
          <Hint $mt={4.6}><Bulb /><div>For more information on how to create a connection to<br />SleekFlow, see the <em>online Help</em>.</div></Hint>
        </Field>
        {FIELDS.map(([label, pill, hint, h, mt]) => (
          <Field key={label} $h={h}>
            <Label><Chev />{label}</Label>
            <Input><Pill>{pill}</Pill></Input>
            <Hint $mt={mt}><Bulb />{hint}</Hint>
          </Field>
        ))}
        <Field $h={40} $pt={13.6}><Label $b><Chev />Custom Field Name</Label><MapSwitch /><MapText>Map</MapText></Field>
      </DialogBody>
      <DialogFoot><FootBtn $w={43.7}>Cancel</FootBtn><FootBtn $w={26} $p>OK</FootBtn></DialogFoot>
    </Dialog>
  );
}

export default function App() {
  return (
    <Page>
      <GlobalStyle />
      <Shelf>
        <AutomationList />
        <Frame $u={0.777} $w={802.5} $h={491} $pt={8.2} $pb={0} $pl={11.3}>
          <Scenario ox={1085.5} oy={24} s={1} {...WEBINAR} />
          <Header><Back><ArrowLeft strokeWidth={2} /></Back><span>Zoom - Create link from CF (SP)</span></Header>
          <Toolbar on text="Immediately as data arrives." sw={127.6} sl={5} gap={25.9} sz={21.5} g={5.25} />
        </Frame>
      </Shelf>
      <Shelf>
        <Frame $u={1} $w={825} $h={509.5} $pt={15.7} $pb={4} $pl={13.4} $line="#b9c3cc">
          <Scenario ox={34} oy={549} s={1.204} {...EXCEL} />
          <Header><Back><ArrowLeft strokeWidth={2} /></Back><span>Integration Microsoft 365 Excel, SleekFlow (If user add new row)</span></Header>
          <Toolbar text="Every 15 minutes." sw={116.3} sl={4.8} gap={28.6} sz={27.3} g={7.3} short />
          <Log>
            <LogLine><span>09.56</span>The request was accepted. Waiting for the server.</LogLine>
            <LogLine><span>09.56</span>The scenario was initialized.</LogLine>
            <LogLine $err><span>09.56</span>The operation failed with an error. Validation failed for 4 parameter(s).</LogLine>
            <LogLine><span>09.56</span>The scenario was finalized.</LogLine>
          </Log>
          <LogCaption>LOG</LogCaption>
          <ModuleDialog />
        </Frame>
        <Frame $u={0.755} $w={989} $h={509.5} $pt={9.1} $pb={1.6} $pl={14.2}>
          <Scenario ox={899} oy={549} s={0.5654} {...FULL} />
          <Header><Back><ArrowLeft strokeWidth={2} /></Back><span>Zoom - Create link from CF (SP)</span></Header>
          <Toolbar on text="Immediately as data arrives." sw={125} sl={4} gap={26.4} sz={20.8} g={5.3} />
          <Assist><svg width="8" height="10" viewBox="0 0 8 10"><path d="M1 1V9M4 3V9M7 1V9" stroke="#fff" strokeWidth="1.4" /></svg></Assist>
        </Frame>
      </Shelf>
    </Page>
  );
}
